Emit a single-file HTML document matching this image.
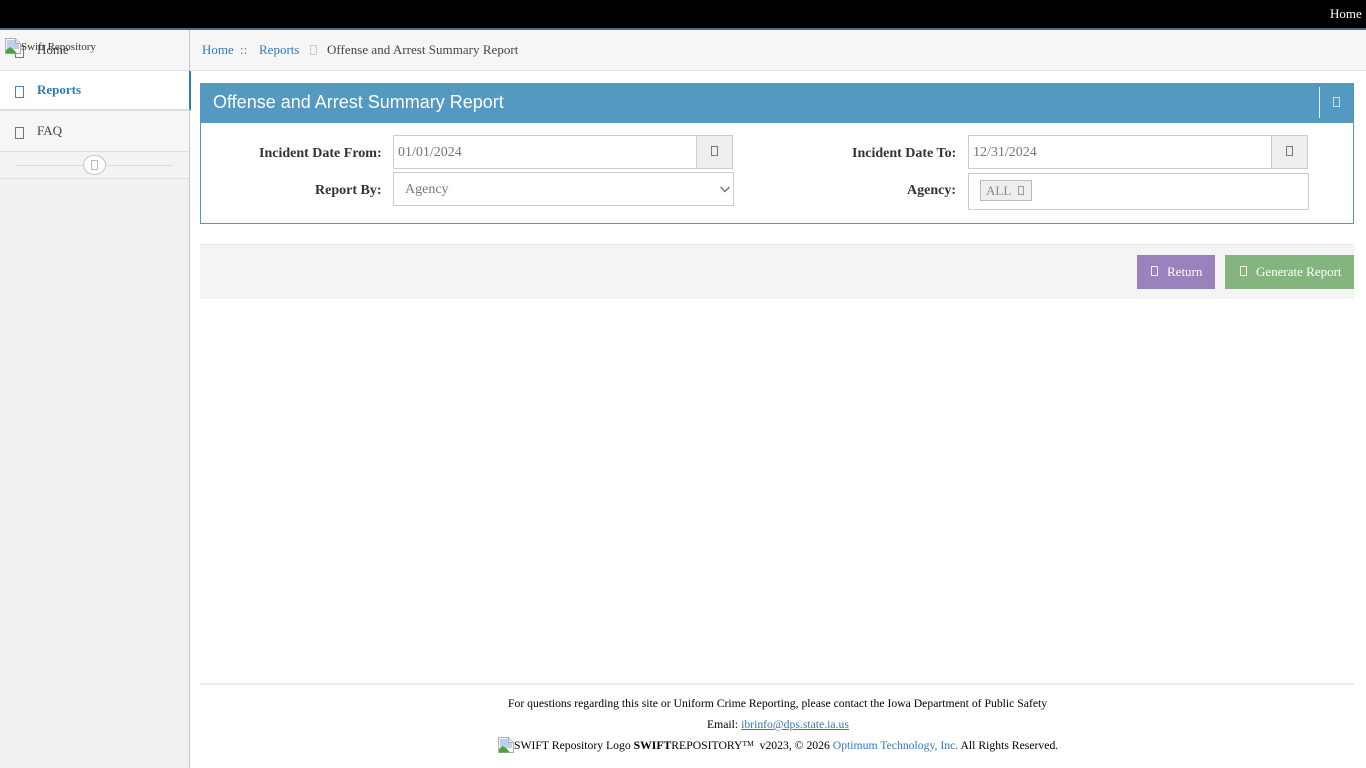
<!DOCTYPE html>
<html lang="en">
<head>
<meta charset="utf-8">
<title>Offense and Arrest Summary Report</title>
<style>
html,body{margin:0;padding:0;width:1366px;height:768px;overflow:hidden;background:#fff;font-family:"Liberation Serif",serif;font-size:13px;color:#333}
.a{position:absolute;box-sizing:border-box}
.t{position:absolute;white-space:nowrap;line-height:16px}
.b{position:absolute;box-sizing:border-box;border:1px solid currentColor}
a{color:#337ab7;text-decoration:none}
.lbl{position:absolute;white-space:nowrap;font-weight:bold;font-size:14px;line-height:16px;color:#333;text-align:right}
</style>
</head>
<body>
<!-- top bar -->
<div class="a" style="left:0;top:0;width:1366px;height:28px;background:#000"></div>
<div class="a" style="left:0;top:28px;width:1366px;height:2px;background:#3d6f8f"></div>
<div class="t" style="left:1330px;top:6px;color:#fff;font-size:13px">Home</div>

<!-- sidebar -->
<div class="a" style="left:0;top:30px;width:190px;height:738px;background:#f1f1f1;border-right:1px solid #c8c8c8"></div>
<div class="a" style="left:0;top:30px;width:189px;height:41px;background:#f6f6f6;border-bottom:1px solid #e2e2e2"></div>
<div class="a" style="left:0;top:71px;width:191px;height:40px;background:#fff;border-bottom:2px solid #dedede;border-right:2px solid #3a7aa8"></div>
<div class="a" style="left:0;top:111px;width:189px;height:41px;background:#f6f6f6;border-bottom:1px solid #e0e0e0"></div>
<div class="a" style="left:0;top:152px;width:189px;height:27px;background:#f3f3f3;border-bottom:1px solid #e0e0e0"></div>

<span class="b" style="left:15px;top:46px;width:9px;height:12px;color:#777"></span>
<div class="t" style="left:37px;top:42px;font-size:13px;color:#444">Home</div>
<svg class="a" style="left:5px;top:38px" width="16" height="16" viewBox="0 0 16 16"><path d="M.5.5h10l5 5v10H.5z" fill="#f4f6fa" stroke="#b0b0b0"/><path d="M10.500.5v5h5" fill="#e2e2e2" stroke="#b0b0b0"/><path d="M2 2h8v4h4v5H2z" fill="#bcd0ee"/><path d="M1 15.500v-3.500l4-3 3.500 2.500 3.500 4z" fill="#4fa03c"/></svg>
<div class="t" style="left:21px;top:39px;font-size:11px;color:#333">Swift Repository</div>

<span class="b" style="left:15px;top:86px;width:9px;height:12px;color:#4a86b5"></span>
<div class="t" style="left:37px;top:82px;font-size:13px;font-weight:bold;color:#337ab7">Reports</div>
<span class="b" style="left:15px;top:127px;width:9px;height:12px;color:#777"></span>
<div class="t" style="left:37px;top:123px;font-size:13px;color:#444">FAQ</div>

<div class="a" style="left:16px;top:165px;width:157px;height:1px;background:#dcdcdc"></div>
<div class="a" style="left:83px;top:155px;width:23px;height:20px;border:1px solid #c4c4c4;border-radius:50%;background:#fff"></div>
<span class="b" style="left:91px;top:160px;width:7px;height:10px;color:#bbb"></span>

<!-- breadcrumb -->
<div class="a" style="left:190px;top:30px;width:1176px;height:41px;background:#f6f6f6;border-bottom:1px solid #e2e2e2"></div>
<div class="t" style="left:202px;top:42px;font-size:13px;"><a href="#">Home</a></div>
<div class="t" style="left:240px;top:42px;font-size:13px;color:#777">::</div>
<div class="t" style="left:259px;top:42px;font-size:13px;"><a href="#">Reports</a></div>
<span class="b" style="left:310px;top:45px;width:7px;height:10px;color:#ccc"></span>
<div class="t" style="left:327px;top:42px;font-size:13px;letter-spacing:.03px;color:#444">Offense and Arrest Summary Report</div>

<!-- panel -->
<div class="a" style="left:200px;top:83px;width:1154px;height:141px;border:1px solid #5a94b8;background:#fff"></div>
<div class="a" style="left:200px;top:83px;width:1154px;height:40px;background:#5499c2"></div>
<div class="t" style="left:213px;top:91px;font-family:'Liberation Sans',sans-serif;font-size:18px;line-height:22px;color:#fff">Offense and Arrest Summary Report</div>
<div class="a" style="left:1319px;top:87px;width:1px;height:31px;background:#e4f0f7"></div>
<span class="b" style="left:1333px;top:97px;width:7px;height:10px;color:#c9dfec"></span>

<!-- row 1 -->
<div class="lbl" style="left:259px;top:146px">Incident Date From:</div>
<div class="a" style="left:393px;top:135px;width:304px;height:34px;border:1px solid #ccc;background:#fff"></div>
<div class="t" style="left:398px;top:145px;font-size:14px;color:#777">01/01/2024</div>
<div class="a" style="left:696px;top:135px;width:37px;height:34px;border:1px solid #ccc;background:#eee"></div>
<span class="b" style="left:711px;top:146px;width:7px;height:10px;color:#777"></span>

<div class="lbl" style="left:852px;top:146px">Incident Date To:</div>
<div class="a" style="left:968px;top:135px;width:304px;height:34px;border:1px solid #ccc;background:#fff"></div>
<div class="t" style="left:973px;top:145px;font-size:14px;color:#777">12/31/2024</div>
<div class="a" style="left:1271px;top:135px;width:37px;height:34px;border:1px solid #ccc;background:#eee"></div>
<span class="b" style="left:1286px;top:146px;width:7px;height:10px;color:#777"></span>

<!-- row 2 -->
<div class="lbl" style="left:315px;top:183px">Report By:</div>
<div class="a" style="left:393px;top:172px;width:341px;height:34px;border:1px solid #ccc;background:#fff"></div>
<div class="t" style="left:405px;top:182px;font-size:14px;color:#777">Agency</div>
<svg class="a" style="left:719px;top:185px" width="12" height="9" viewBox="0 0 12 9"><path d="M1.500 2l4.500 4.500L10.500 2" fill="none" stroke="#777" stroke-width="1.500"/></svg>

<div class="lbl" style="left:907px;top:183px">Agency:</div>
<div class="a" style="left:968px;top:173px;width:341px;height:37px;border:1px solid #ccc;background:#fff"></div>
<div class="a" style="left:980px;top:180px;width:52px;height:21px;border:1px solid #bbb;background:#eee"></div>
<div class="t" style="left:986px;top:183px;font-size:13px;color:#888">ALL</div>
<span class="b" style="left:1018px;top:186px;width:6px;height:9px;color:#999"></span>

<!-- action bar -->
<div class="a" style="left:200px;top:244px;width:1154px;height:55px;background:#f4f4f4;border-top:1px solid #e8e8e8"></div>
<div class="a" style="left:1137px;top:255px;width:78px;height:34px;background:#9a82bd"></div>
<span class="b" style="left:1151px;top:266px;width:7px;height:10px;color:#f4f0fa"></span>
<div class="t" style="left:1167px;top:264px;font-size:13px;color:#fff">Return</div>
<div class="a" style="left:1225px;top:255px;width:129px;height:34px;background:#84b57f"></div>
<span class="b" style="left:1240px;top:266px;width:7px;height:10px;color:#eef6ec"></span>
<div class="t" style="left:1256px;top:264px;font-size:13px;color:#fff">Generate Report</div>

<!-- footer -->
<div class="a" style="left:200px;top:683px;width:1154px;height:2px;background:#ebebeb"></div>
<div class="t" style="left:508px;top:696px;font-size:11.7px;color:#000">For questions regarding this site or Uniform Crime Reporting, please contact the Iowa Department of Public Safety</div>
<div class="t" style="left:707px;top:717px;font-size:11.7px;color:#000">Email: <a href="#" style="text-decoration:underline">ibrinfo@dps.state.ia.us</a></div>
<svg class="a" style="left:498px;top:737px" width="16" height="16" viewBox="0 0 16 16"><path d="M.5.5h10l5 5v10H.5z" fill="#f4f6fa" stroke="#b0b0b0"/><path d="M10.500.5v5h5" fill="#e2e2e2" stroke="#b0b0b0"/><path d="M2 2h8v4h4v5H2z" fill="#bcd0ee"/><path d="M1 15.500v-3.500l4-3 3.500 2.500 3.500 4z" fill="#4fa03c"/></svg>
<div class="t" style="left:514px;top:736px;font-size:11.7px;color:#000">SWIFT Repository Logo <b>SWIFT</b>REPOSITORY<span style="font-size:7.5px;vertical-align:3px">TM</span>&nbsp; v2023, © 2026 <a href="#">Optimum Technology, Inc.</a> All Rights Reserved.</div>
</body>
</html>
